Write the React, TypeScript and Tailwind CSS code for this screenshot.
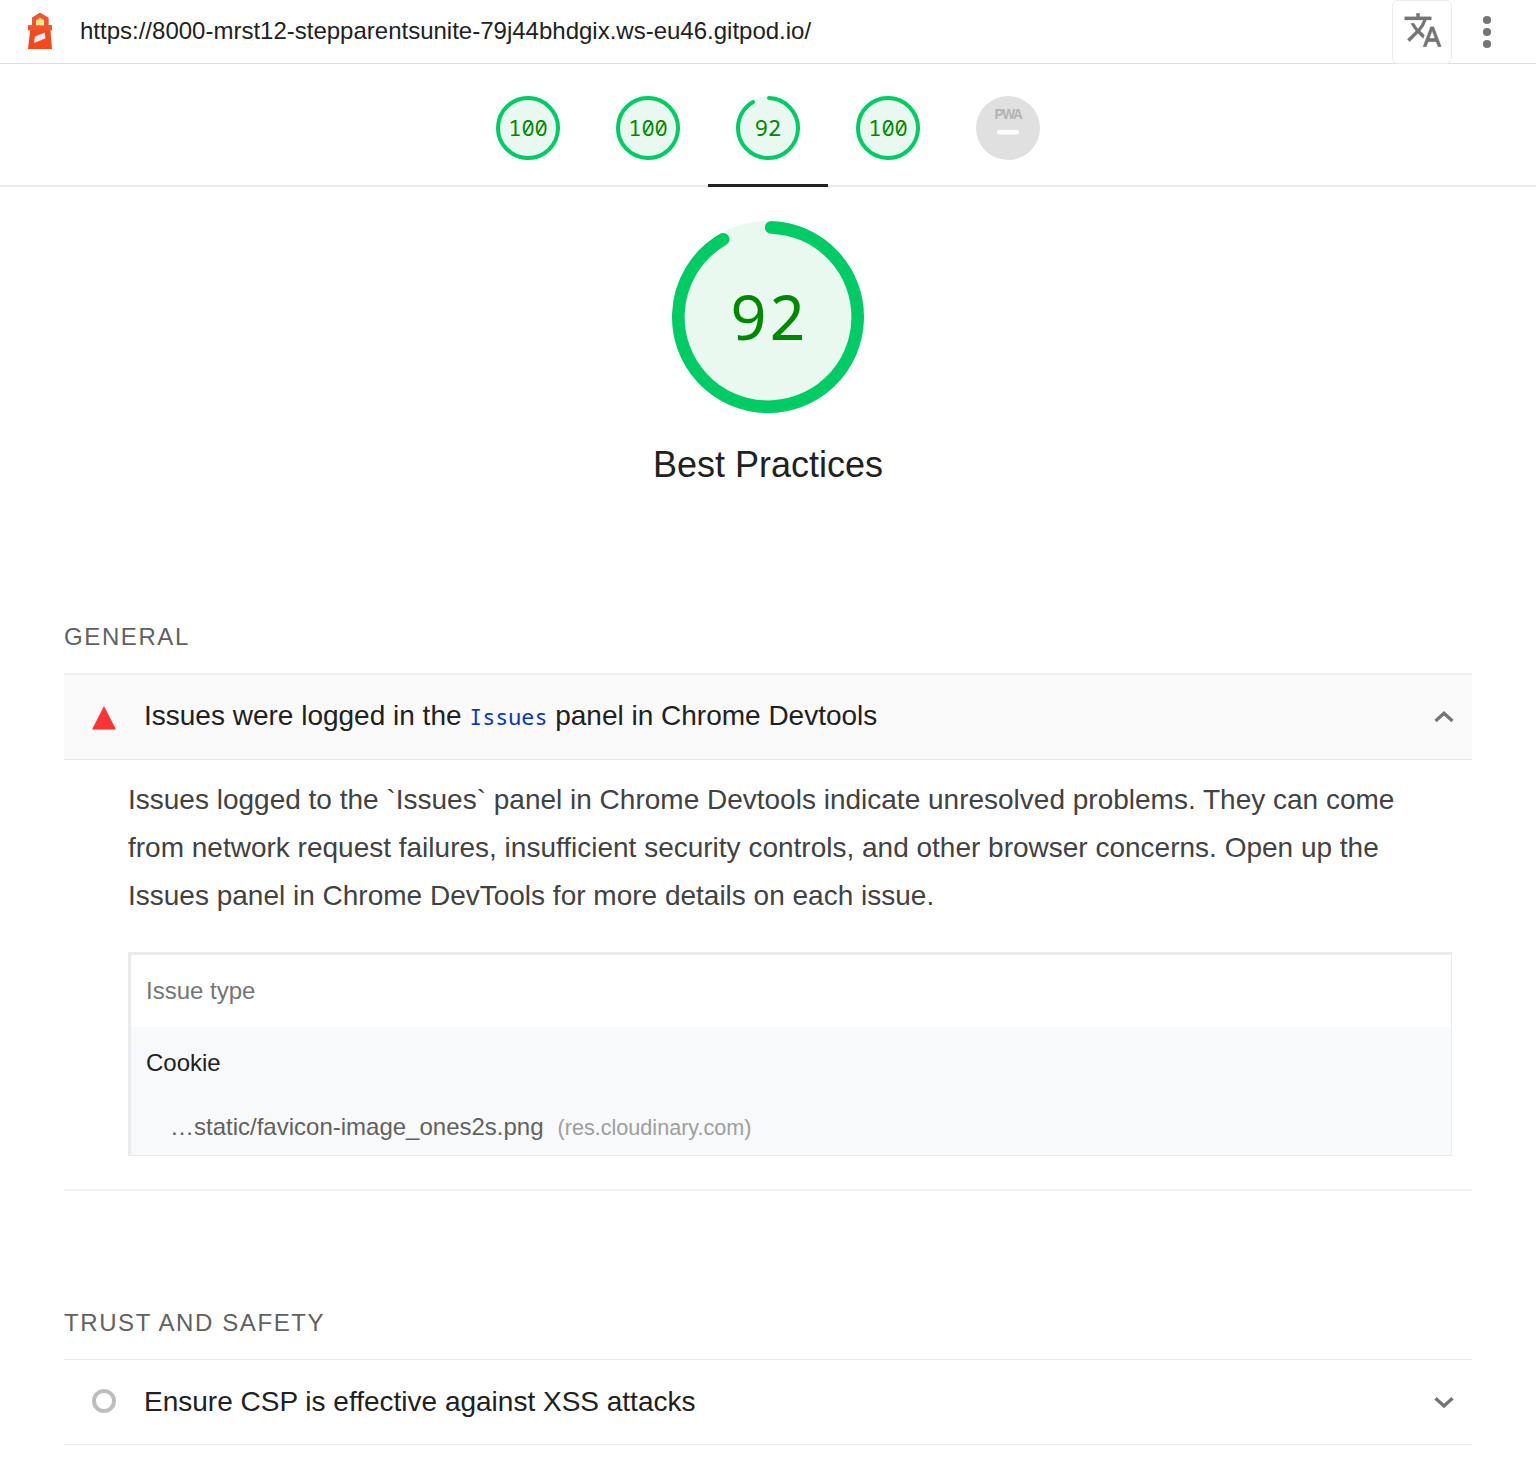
import React from 'react';

function Lighthouse() {
  return (
    <svg width="48" height="48" viewBox="0 0 48 48" className="shrink-0">
      <path d="M12 5.8 20 .8l8.4 5v7.4H32v5h-1.6L32 37H8l2.2-18.8H8v-5h4z" fill="#f4481e" />
      <path d="M12 5.8 20 .8l8.4 5v7.4H32v5H8v-5h4z" fill="#ee5535" />
      <path d="M16 13.2V8.4L20 5.8l4 2.6v4.8z" fill="#fae27a" />
      <path d="M20 5.8l4 2.6v4.8h-4z" fill="#f3e98a" />
      <path d="M14.8 24.4 24.8 20.4l.6 6-11.4 4.6z" fill="#eceaea" />
    </svg>
  );
}

function Ring({ size, width, partial, offset }: { size: number; width: number; partial?: boolean; offset: number }) {
  const r = (size - width) / 2;
  const c = size / 2;
  const len = 2 * Math.PI * r;
  return (
    <svg width={size} height={size} viewBox={`0 0 ${size} ${size}`} className="col-start-1 row-start-1">
      <circle cx={c} cy={c} r={c} fill="#e9f9f0" />
      <circle
        cx={c}
        cy={c}
        r={r}
        fill="none"
        stroke="#0c6"
        strokeWidth={width}
        strokeLinecap="round"
        strokeDasharray={partial ? `${(len * (329.5 - offset)) / 360} ${len}` : undefined}
        transform={`rotate(${offset - 90} ${c} ${c})`}
      />
    </svg>
  );
}

function Gauge({ score, active }: { score: number; active?: boolean }) {
  return (
    <div className={active ? 'relative flex h-[123px] w-[120px] justify-center pt-8 after:absolute after:bottom-0 after:left-0 after:h-[3px] after:w-full after:bg-[#212121]' : 'flex h-[123px] w-[120px] justify-center pt-8'}>
      <div className="grid h-16 w-16 grid-cols-[64px] grid-rows-[64px] place-items-center">
        <Ring size={64} width={4} partial={score < 100} offset={2} />
        <span className="col-start-1 row-start-1 mb-0.5 font-['Noto_Sans_Mono',monospace] text-[22px] leading-[62px] text-[#080]">{score}</span>
      </div>
    </div>
  );
}

function Pwa() {
  return (
    <div className="flex h-[123px] w-[120px] justify-center pt-8">
      <svg width="64" height="64" viewBox="0 0 64 64">
        <circle cx="32" cy="32" r="32" fill="#e0e0e0" />
        <text x="18.5" y="22.8" textLength="27" lengthAdjust="spacingAndGlyphs" fontFamily="Liberation Sans, sans-serif" fontWeight="700" fontSize="14" letterSpacing="-1.4" fill="#b3b3b3">PWA</text>
        <rect x="21" y="34" width="22" height="4.4" rx="2.2" fill="#fff" />
      </svg>
    </div>
  );
}

function Chevron({ up }: { up?: boolean }) {
  return (
    <svg width="20" height="20" viewBox="0 0 20 20" fill="none" stroke="#757575" strokeWidth="3.3">
      <path d={up ? 'M1.5 14 10 6.2l8.5 7.8' : 'M1.5 6.2l8.5 7.8 8.5-7.8'} />
    </svg>
  );
}

export default function App() {
  return (
    <div className="h-[1470px] w-[1536px] overflow-hidden bg-white font-['Liberation_Sans',Arial,sans-serif] text-[#212121]">
      <header className="flex h-16 border-b-[1.5px] border-[#e0e0e0] pl-5">
        <div className="pt-3"><Lighthouse /></div>
        <div className="ml-3 text-2xl leading-[62px] whitespace-nowrap">https://8000-mrst12-stepparentsunite-79j44bhdgix.ws-eu46.gitpod.io/</div>
        <div className="ml-auto flex h-16 w-[60px] shrink-0 justify-center rounded-md border-[1.5px] border-[#ebebeb] bg-white pt-[9px] pl-px">
          <svg width="40" height="40" viewBox="0 0 24 24" fill="#757575">
            <path d="M12.87 15.07l-2.54-2.51.03-.03A17.52 17.52 0 0 0 14.07 6H17V4h-7V2H8v2H1v1.99h11.17A15.7 15.7 0 0 1 9 11.35 15.54 15.54 0 0 1 6.69 8h-2a17.6 17.6 0 0 0 2.98 4.56l-5.09 5.02L4 19l5-5 3.11 3.11.76-2.04zM18.5 10h-2L12 22h2l1.12-3h4.75L21 22h2l-4.5-12zm-2.62 7l1.62-4.33L19.12 17h-3.24z" stroke="#757575" strokeWidth="0.15" />
          </svg>
        </div>
        <div className="flex w-[84px] shrink-0 justify-center pr-[15px] pt-2">
          <svg width="48" height="48" viewBox="0 0 48 48" fill="#757575">
            <circle cx="24" cy="12" r="4.1" /><circle cx="24" cy="24" r="4.1" /><circle cx="24" cy="36" r="4.1" />
          </svg>
        </div>
      </header>

      <nav className="flex h-[123px] justify-center border-b-2 border-[#ebebeb]">
        <Gauge score={100} />
        <Gauge score={100} />
        <Gauge score={92} active />
        <Gauge score={100} />
        <Pwa />
      </nav>

      <section className="flex h-[421px] flex-col items-center pt-[34px]">
        <div className="grid h-48 w-48 grid-cols-[192px] grid-rows-[192px] place-items-center">
          <Ring size={192} width={12.6} partial offset={2} />
          <span className="col-start-1 row-start-1 mb-0.5 pl-[1px] font-['Noto_Sans_Mono',monospace] text-[61.5px] leading-[190px] tracking-[1.6px] text-[#080]">92</span>
        </div>
        <h1 className="mt-7 text-4xl leading-[48px]">Best Practices</h1>
      </section>

      <main className="px-16">
        <h2 className="h-[65px] pt-[9px] text-2xl leading-[40px] tracking-[1.6px] text-[#616161]">GENERAL</h2>
        <div className="flex h-[87px] items-center border-t-2 border-b border-t-[#f0f0f0] border-b-[#e8e8e8] bg-[#fafafa] pr-[18px] pl-7">
          <svg width="24" height="24" viewBox="0 0 24 24" className="mt-px"><path d="M12 0l12 23.5H0z" fill="#f33" /></svg>
          <div className="mb-0.5 ml-7 text-[28px] leading-[48px]">
            Issues were logged in the <code className="font-['Noto_Sans_Mono',monospace] text-[21.7px] leading-none text-[#0535c1]">Issues</code> panel in Chrome Devtools
          </div>
          <div className="mb-px ml-auto"><Chevron up /></div>
        </div>
        <div className="h-[431px] border-b-2 border-[#f0f0f0] pt-4 pr-5 pl-16">
          <p className="text-[28px] leading-[48px] text-[#424242]">
            Issues logged to the `Issues` panel in Chrome Devtools indicate unresolved problems. They can come<br />
            from network request failures, insufficient security controls, and other browser concerns. Open up the<br />
            Issues panel in Chrome DevTools for more details on each issue.
          </p>
          <div className="mt-8 h-[204px] border-t-[3px] border-r border-b border-l-[3px] border-[#ebebeb] bg-[#f8f9fb] text-2xl">
            <div className="h-[72px] bg-white pt-3 pl-[15px] leading-[48px] text-[#757575]">Issue type</div>
            <div className="h-16 pt-3 pl-[15px] leading-[48px]">Cookie</div>
            <div className="flex h-16 items-baseline pt-3 pl-[39px] leading-[48px] text-[#616161]">
              <span>…static/favicon-image_ones2s.png</span>
              <span className="ml-3.5 text-[21.6px] text-[#9e9e9e]">(res.cloudinary.com)</span>
            </div>
          </div>
        </div>
        <h2 className="mt-[108px] h-[60px] pt-1 text-2xl leading-[40px] tracking-[1.6px] text-[#616161]">TRUST AND SAFETY</h2>
        <div className="flex h-[86px] items-center border-y-[1.5px] border-[#e8e8e8] pr-[18px] pl-7">
          <div className="mb-0.5 h-6 w-6 rounded-full border-4 border-[#bdbdbd]" />
          <div className="mb-px ml-7 text-[28px] leading-[48px]">Ensure CSP is effective against XSS attacks</div>
          <div className="ml-auto"><Chevron /></div>
        </div>
      </main>
    </div>
  );
}
